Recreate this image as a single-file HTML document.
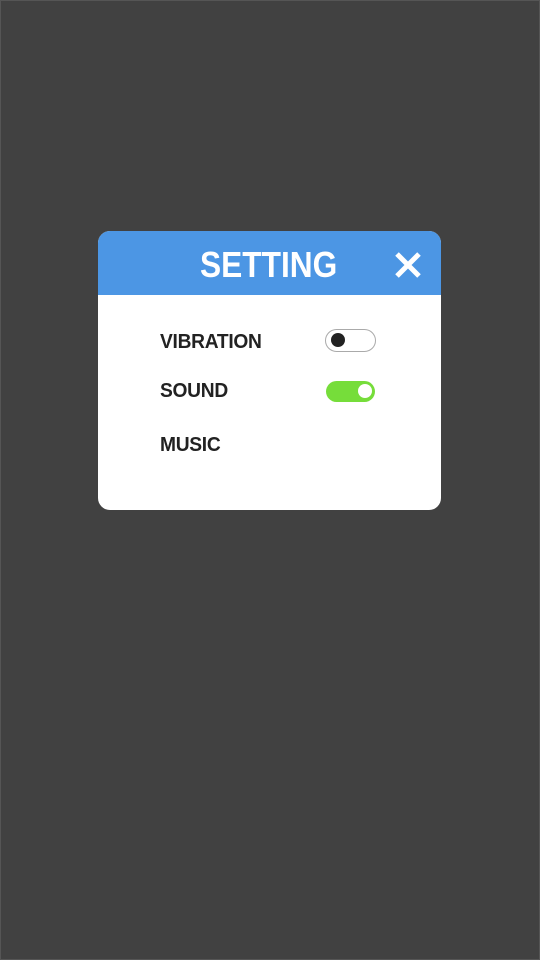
<!DOCTYPE html>
<html><head><style>
html,body{margin:0;padding:0}
body{width:540px;height:960px;background:#414141;position:relative;overflow:hidden;font-family:"Liberation Sans",sans-serif;box-shadow:inset 0 0 0 1px #555}
.panel{position:absolute;left:98px;top:231px;width:343px;height:279px;background:#fff;border-radius:12px;overflow:hidden}
.hdr{position:absolute;left:0;top:0;width:343px;height:64px;background:#4c96e4}
.title{position:absolute;left:102px;top:13px;color:#fff;font-size:36px;font-weight:bold;transform:scaleX(0.88);transform-origin:left top}
.lbl{position:absolute;left:62px;color:#222;font-size:20px;font-weight:bold;letter-spacing:-0.3px;transform:scaleX(0.96);transform-origin:left top}
.t{position:absolute;border-radius:12px;box-sizing:border-box}
</style></head><body>
<div class="panel">
<div class="hdr">
<div class="title">SETTING</div>
<svg style="position:absolute;left:296px;top:20px" width="28" height="28" viewBox="0 0 28 28"><path d="M3 3L25 25M25 3L3 25" stroke="#fff" stroke-width="5"/></svg>
</div>
<div class="lbl" style="top:100px">VIBRATION</div>
<div class="lbl" style="top:149px">SOUND</div>
<div class="lbl" style="top:203px">MUSIC</div>
<div class="t" style="left:227px;top:98px;width:51px;height:23px;border:1px solid #aaa;background:#fff">
<div style="position:absolute;left:5px;top:3px;width:14px;height:14px;border-radius:50%;background:#222"></div></div>
<div class="t" style="left:228px;top:150px;width:49px;height:21px;background:#76dd3a">
<div style="position:absolute;left:32px;top:3px;width:14px;height:14px;border-radius:50%;background:#fff"></div></div>
</div>
</body></html>
